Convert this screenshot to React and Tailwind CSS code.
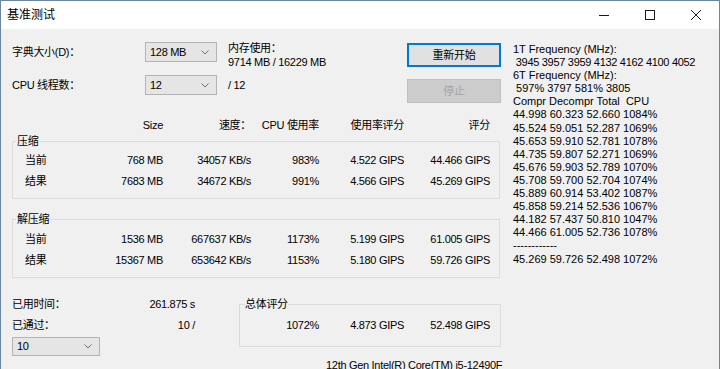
const Chevron = () => (
  <svg width="8" height="5" viewBox="0 0 8 5" className="text-[#707070]">
    <path d="M0.5 0.5 L4 4 L7.5 0.5" fill="none" stroke="currentColor" strokeWidth="1" />
  </svg>
);

const Combo = ({ value, className }) => (
  <div
    className={`flex items-center justify-between border border-[#b4b4b4] bg-[#e5e5e5] pl-[4px] pr-[7px] ${className}`}
  >
    <span>{value}</span>
    <Chevron />
  </div>
);

const TitleBar = () => (
  <div className="flex h-[28px] shrink-0 items-center justify-between bg-white">
    <div className="pl-[6px] text-[12px]">基准测试</div>
    <div className="flex h-full">
      <div className="flex h-full w-[46px] items-center justify-center">
        <svg width="10" height="10" viewBox="0 0 10 10">
          <path d="M0 5.5 H10" stroke="#1a1a1a" strokeWidth="1" />
        </svg>
      </div>
      <div className="flex h-full w-[46px] items-center justify-center">
        <svg width="10" height="10" viewBox="0 0 10 10">
          <rect x="0.5" y="0.5" width="9" height="9" fill="none" stroke="#1a1a1a" strokeWidth="1" />
        </svg>
      </div>
      <div className="flex h-full w-[46px] items-center justify-center">
        <svg width="10" height="10" viewBox="0 0 10 10">
          <path d="M0 0 L10 10 M10 0 L0 10" stroke="#1a1a1a" strokeWidth="1" />
        </svg>
      </div>
    </div>
  </div>
);

const cols = "grid grid-cols-[88px_63px_88px_68px_85px_86px]";
const boxCols = "grid grid-cols-[87px_63px_88px_68px_85px_86px]";

const ResultRow = ({ label, size, speed, cpu, rating, score }) => (
  <div className={`${boxCols} h-[21px] items-center`}>
    <span className="pl-[12px]">{label}</span>
    <span className="text-right">{size}</span>
    <span className="text-right">{speed}</span>
    <span className="text-right">{cpu}</span>
    <span className="text-right">{rating}</span>
    <span className="text-right">{score}</span>
  </div>
);

const rightLines = [
  "1T Frequency (MHz):",
  " 3945 3957 3959 4132 4162 4100 4052",
  "6T Frequency (MHz):",
  " 597% 3797 581% 3805",
  "Compr Decompr Total  CPU",
  "44.998 60.323 52.660 1084%",
  "45.524 59.051 52.287 1069%",
  "45.653 59.910 52.781 1078%",
  "44.735 59.807 52.271 1069%",
  "45.676 59.903 52.789 1070%",
  "45.708 59.700 52.704 1074%",
  "45.889 60.914 53.402 1087%",
  "45.858 59.214 52.536 1067%",
  "44.182 57.437 50.810 1047%",
  "44.466 61.005 52.736 1078%",
  "------------",
  "45.269 59.726 52.498 1072%",
];

export default function App() {
  return (
    <div className="flex h-[369px] w-[720px] flex-col overflow-hidden border border-b-0 border-[#6b87a0] bg-[#f0f0f0] font-['Liberation_Sans','Noto_Sans_CJK_SC',sans-serif] text-[11px] leading-[13px] text-black">
      <TitleBar />
      <div className="flex min-h-0 flex-1 overflow-hidden">
        <div className="w-[512px] shrink-0 pl-[11px] tracking-[-0.3px]">
          <div className="flex items-start">
            <div className="mt-[13px] flex w-[133px] flex-col gap-[13px]">
              <div className="flex h-[20px] items-center">字典大小(D)：</div>
              <div className="flex h-[20px] items-center">CPU 线程数：</div>
            </div>
            <div className="mt-[13px] flex w-[72px] flex-col gap-[13px]">
              <Combo value="128 MB" className="h-[20px]" />
              <Combo value="12" className="h-[20px]" />
            </div>
            <div className="ml-[11px] mt-[12px] w-[179px] leading-[14px]">
              <div>内存使用：</div>
              <div>9714 MB / 16229 MB</div>
              <div className="mt-[9px]">/ 12</div>
            </div>
            <div className="mt-[14px] flex w-[94px] flex-col gap-[12px]">
              <div className="flex h-[24px] items-center justify-center border border-[#0078d7] bg-[#e1e1e1] shadow-[inset_0_0_0_1px_#0078d7]">
                重新开始
              </div>
              <div className="flex h-[24px] items-center justify-center border border-[#bfbfbf] bg-[#cccccc] text-[#a3a3a3]">
                停止
              </div>
            </div>
          </div>

          <div className={`${cols} mt-[16px]`}>
            <span />
            <span className="text-right">Size</span>
            <span className="text-right">速度：</span>
            <span className="text-right">CPU 使用率</span>
            <span className="text-right">使用率评分</span>
            <span className="text-right">评分</span>
          </div>

          <fieldset className="mt-[3px] w-[488px] border border-[#dcdcdc] pb-[6px] pt-[2px]">
            <legend className="ml-[3px] px-[1px]">压缩</legend>
            <ResultRow label="当前" size="768 MB" speed="34057 KB/s" cpu="983%" rating="4.522 GIPS" score="44.466 GIPS" />
            <ResultRow label="结果" size="7683 MB" speed="34672 KB/s" cpu="991%" rating="4.566 GIPS" score="45.269 GIPS" />
          </fieldset>

          <fieldset className="mt-[14px] w-[488px] border border-[#dcdcdc] pb-[6px] pt-[3px]">
            <legend className="ml-[3px] px-[1px]">解压缩</legend>
            <ResultRow label="当前" size="1536 MB" speed="667637 KB/s" cpu="1173%" rating="5.199 GIPS" score="61.005 GIPS" />
            <ResultRow label="结果" size="15367 MB" speed="653642 KB/s" cpu="1153%" rating="5.180 GIPS" score="59.726 GIPS" />
          </fieldset>

          <div className="mt-[20px] flex items-start">
            <div className="w-[183px]">
              <div className="flex justify-between">
                <span>已用时间：</span>
                <span>261.875 s</span>
              </div>
              <div className="mt-[8px] flex justify-between">
                <span>已通过：</span>
                <span>10 /</span>
              </div>
              <Combo value="10" className="mt-[5px] h-[19px] w-[88px]" />
            </div>
            <fieldset className="ml-[44px] w-[262px] border border-[#dcdcdc] pb-[10px] pt-[4px]">
              <legend className="ml-[5px]">总体评分</legend>
              <div className="grid h-[21px] grid-cols-[11px_68px_85px_86px] items-center">
                <span />
                <span className="text-right">1072%</span>
                <span className="text-right">4.873 GIPS</span>
                <span className="text-right">52.498 GIPS</span>
              </div>
            </fieldset>
          </div>

          <div className="ml-[314px] mt-[3px] whitespace-nowrap">
            12th Gen Intel(R) Core(TM) i5-12490F
          </div>
        </div>

        <div className="mt-[14px] flex-1 leading-[13.1px]">
          {rightLines.map((line, i) => (
            <div key={i} className={i === 1 ? "whitespace-pre tracking-[-0.3px]" : "whitespace-pre"}>
              {line}
            </div>
          ))}
        </div>
      </div>
    </div>
  );
}
